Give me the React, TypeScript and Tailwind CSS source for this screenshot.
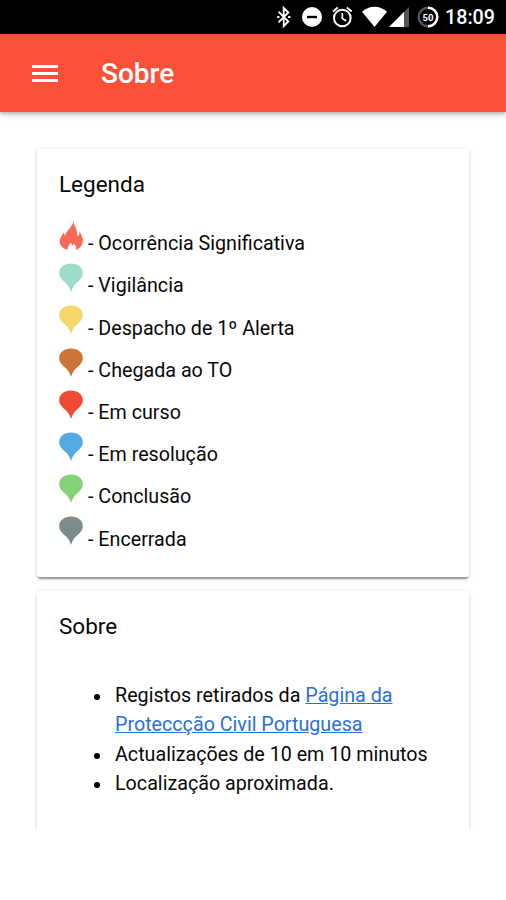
import type { ReactNode } from 'react';

const STATUSES = [
  { label: 'Vigilância', color: '#9edccb' },
  { label: 'Despacho de 1º Alerta', color: '#f4d66b' },
  { label: 'Chegada ao TO', color: '#cb7638' },
  { label: 'Em curso', color: '#f04a35' },
  { label: 'Em resolução', color: '#56a9e3' },
  { label: 'Conclusão', color: '#84d277' },
  { label: 'Encerrada', color: '#7c8c8d' },
];

function StatusBar() {
  return (
    <div className="flex h-[33.5px] shrink-0 items-center justify-end bg-black pr-[11px] text-white">
      <svg width="162" height="34" viewBox="0 0 162 34" fill="none" className="mr-[6px]" aria-hidden="true">
        <path d="M1.5 11.7 11.3 21.500 6.700 26V8L11.300 12.500 1.500 22.300" stroke="#fff" strokeWidth="1.8" />
        <path d="M.2 17h2.2M11.2 17h2.2" stroke="#fff" strokeWidth="2.2" />
        <circle cx="35" cy="17" r="10" fill="#fff" />
        <path d="M30 17h10" stroke="#000" strokeWidth="2.4" />
        <circle cx="65.3" cy="18" r="8.3" stroke="#fff" strokeWidth="2" />
        <path d="M65.3 13v5.4l3.8 2.6" stroke="#fff" strokeWidth="1.7" />
        <path d="m56 11.5 4.8-4M74.6 11.5l-4.8-4" stroke="#fff" strokeWidth="2" />
        <path d="M85 11.7C92.4 5.2 102.6 5.2 110 11.7L97.5 27Z" fill="#fff" />
        <path d="M132 7v20h-20Z" fill="#555" />
        <path d="M127 12v15h-15Z" fill="#fff" />
        <circle cx="151" cy="17" r="9.3" stroke="#555" strokeWidth="2.4" />
        <path d="M151 7.7a9.3 9.3 0 0 1 0 18.6" stroke="#fff" strokeWidth="2.4" />
        <text
          x="151"
          y="20.5"
          textAnchor="middle"
          fill="#fff"
          className="font-[Roboto,sans-serif] text-[9.5px] font-bold"
        >
          50
        </text>
      </svg>
      <span className="pt-[2px] text-[19.7px] leading-none font-medium">18:09</span>
    </div>
  );
}

function Header() {
  return (
    <header className="relative z-10 flex h-[78.5px] shrink-0 items-center bg-[#fb5139] pl-8 text-white shadow-[0_2px_3px_rgba(0,0,0,0.2),0_3px_7px_rgba(0,0,0,0.12)]">
      <button type="button" aria-label="Menu" className="mt-px flex w-[26px] flex-col gap-1">
        <span className="h-[3px] bg-white" />
        <span className="h-[3px] bg-white" />
        <span className="h-[3px] bg-white" />
      </button>
      <h1 className="mt-[2px] ml-[43px] text-[28px] leading-none font-medium">Sobre</h1>
    </header>
  );
}

function Card({ title, className, children }: { title: string; className?: string; children: ReactNode }) {
  return (
    <section
      className={`rounded-[3px] bg-white px-[22px] shadow-[0_3px_2px_-1px_rgba(0,0,0,0.38),0_1px_4px_rgba(0,0,0,0.16)] ${className ?? ''}`}
    >
      <h2 className="pt-[21px] text-[22.5px] leading-7">{title}</h2>
      {children}
    </section>
  );
}

function FlameIcon() {
  return (
    <svg width="24" height="30" viewBox="0 0 24 30" aria-hidden="true">
      <path
        d="M14.3 0C14.8 3.5 18.6 8.5 18.4 15.2C20 14.5 20.9 12.7 20.5 10.2C22 13 23.9 16 23.9 19.5C23.9 24 21 27.5 16.8 28.9C17.5 26 16.8 24.4 14.8 22.5C14.5 23.500 14 24.200 13.200 24.700C13 23.300 12.300 22.400 11.300 21.600C11 23.800 8.200 25.400 8.800 28.800C4.500 28.200.7 24.800.7 20.300C.7 16.700 3.500 14.600 4.700 11.600C5 12.800 5.400 13.900 6.300 14.700C6.800 9.500 13.500 7 14.300 0Z"
        fill="#fa6a58"
      />
    </svg>
  );
}

function PinIcon({ color }: { color: string }) {
  return (
    <svg width="24" height="30" viewBox="0 0 24 30" aria-hidden="true">
      <path
        d="M12 .6C18.800.600 23.800 4.500 23.800 10.200C23.800 14.200 21.200 16.600 18 19.400C14.900 22.200 13.200 24.700 12.200 28.600H11.800C10.800 24.700 9.100 22.200 6 19.400C2.800 16.600.200 14.200.200 10.200C.200 4.500 5.200.600 12 .600Z"
        fill={color}
      />
    </svg>
  );
}

function LegendRow({ icon, label }: { icon: ReactNode; label: string }) {
  return (
    <li className="flex h-[42.2px] items-start gap-[5px]">
      {icon}
      <span className="pt-[9.3px] leading-[28px]">- {label}</span>
    </li>
  );
}

function AboutItem({ children }: { children: ReactNode }) {
  return (
    <li className="flex">
      <span className="mt-[13px] mr-[15px] size-[6px] shrink-0 rounded-full bg-black" />
      <p>{children}</p>
    </li>
  );
}

export default function App() {
  return (
    <div className="flex h-[900px] w-[506px] flex-col overflow-hidden bg-white font-[Roboto,sans-serif] text-[19.7px] text-[#080808]">
      <StatusBar />
      <Header />
      <main className="h-[717px] shrink-0 overflow-hidden px-[37px] pt-[37px]">
        <Card title="Legenda" className="h-[428px]">
          <ul className="mt-[23px]">
            <LegendRow icon={<FlameIcon />} label="Ocorrência Significativa" />
            {STATUSES.map(status => (
              <LegendRow key={status.label} icon={<PinIcon color={status.color} />} label={status.label} />
            ))}
          </ul>
        </Card>
        <Card title="Sobre" className="mt-[14px] h-[300px]">
          <ul className="mt-[40.5px] pl-[35px] leading-[29.6px]">
            <AboutItem>
              Registos retirados da{' '}
              <a href="#" className="text-[#2a6fdb] underline">
                Página da Proteccção Civil Portuguesa
              </a>
            </AboutItem>
            <AboutItem>Actualizações de 10 em 10 minutos</AboutItem>
            <AboutItem>Localização aproximada.</AboutItem>
          </ul>
        </Card>
      </main>
    </div>
  );
}
